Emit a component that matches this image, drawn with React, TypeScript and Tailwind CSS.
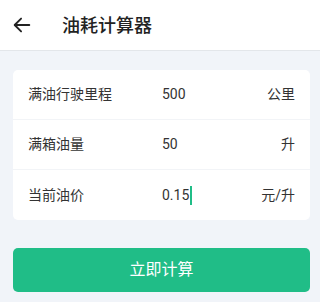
import { useState } from 'react';

const FONT = 'Roboto, "Noto Sans CJK SC", sans-serif';

interface RowProps {
  label: string;
  value: string;
  unit: string;
  focused?: boolean;
  last?: boolean;
}

function FieldRow({ label, value, unit, focused, last }: RowProps) {
  return (
    <div className={`flex h-[50px] items-center pl-[15px] pr-[15px] ${last ? '' : 'border-b border-[#f2f4f7]'}`}>
      <span className="w-[134px] text-[14px] text-[#333333]">{label}</span>
      <span className="flex flex-1 items-center text-[14px] text-[#333333]">
        {value}
        {focused && <span className="ml-[1px] inline-block h-[19px] w-[2px] bg-[#20bd87]" />}
      </span>
      <span className="text-[14px] text-[#333333]">{unit}</span>
    </div>
  );
}

export default function App() {
  const [rows] = useState([
    { label: '满油行驶里程', value: '500', unit: '公里' },
    { label: '满箱油量', value: '50', unit: '升' },
    { label: '当前油价', value: '0.15', unit: '元/升', focused: true },
  ]);

  return (
    <div className="h-[302px] w-[320px] bg-[#f1f4f9]" style={{ fontFamily: FONT }}>
      <header className="flex h-[51px] items-center border-b border-[#e3e6ea] bg-white pl-[11px]">
        <svg width="22" height="22" viewBox="0 0 24 24" fill="none" stroke="#222" strokeWidth="2" strokeLinecap="round" strokeLinejoin="round">
          <path d="M20 12H4.5" />
          <path d="M11 5l-7 7 7 7" />
        </svg>
        <h1 className="ml-[29px] text-[18px] font-medium text-[#222222]">油耗计算器</h1>
      </header>

      <div className="ml-[13px] mt-[19px] w-[297px] rounded-[5px] bg-white">
        {rows.map((row, i) => (
          <FieldRow key={row.label} {...row} last={i === rows.length - 1} />
        ))}
      </div>

      <button className="ml-[13px] mt-[28px] flex h-[44px] w-[297px] items-center justify-center rounded-[5px] bg-[#20bd87] text-[16px] text-white">
        立即计算
      </button>
    </div>
  );
}
